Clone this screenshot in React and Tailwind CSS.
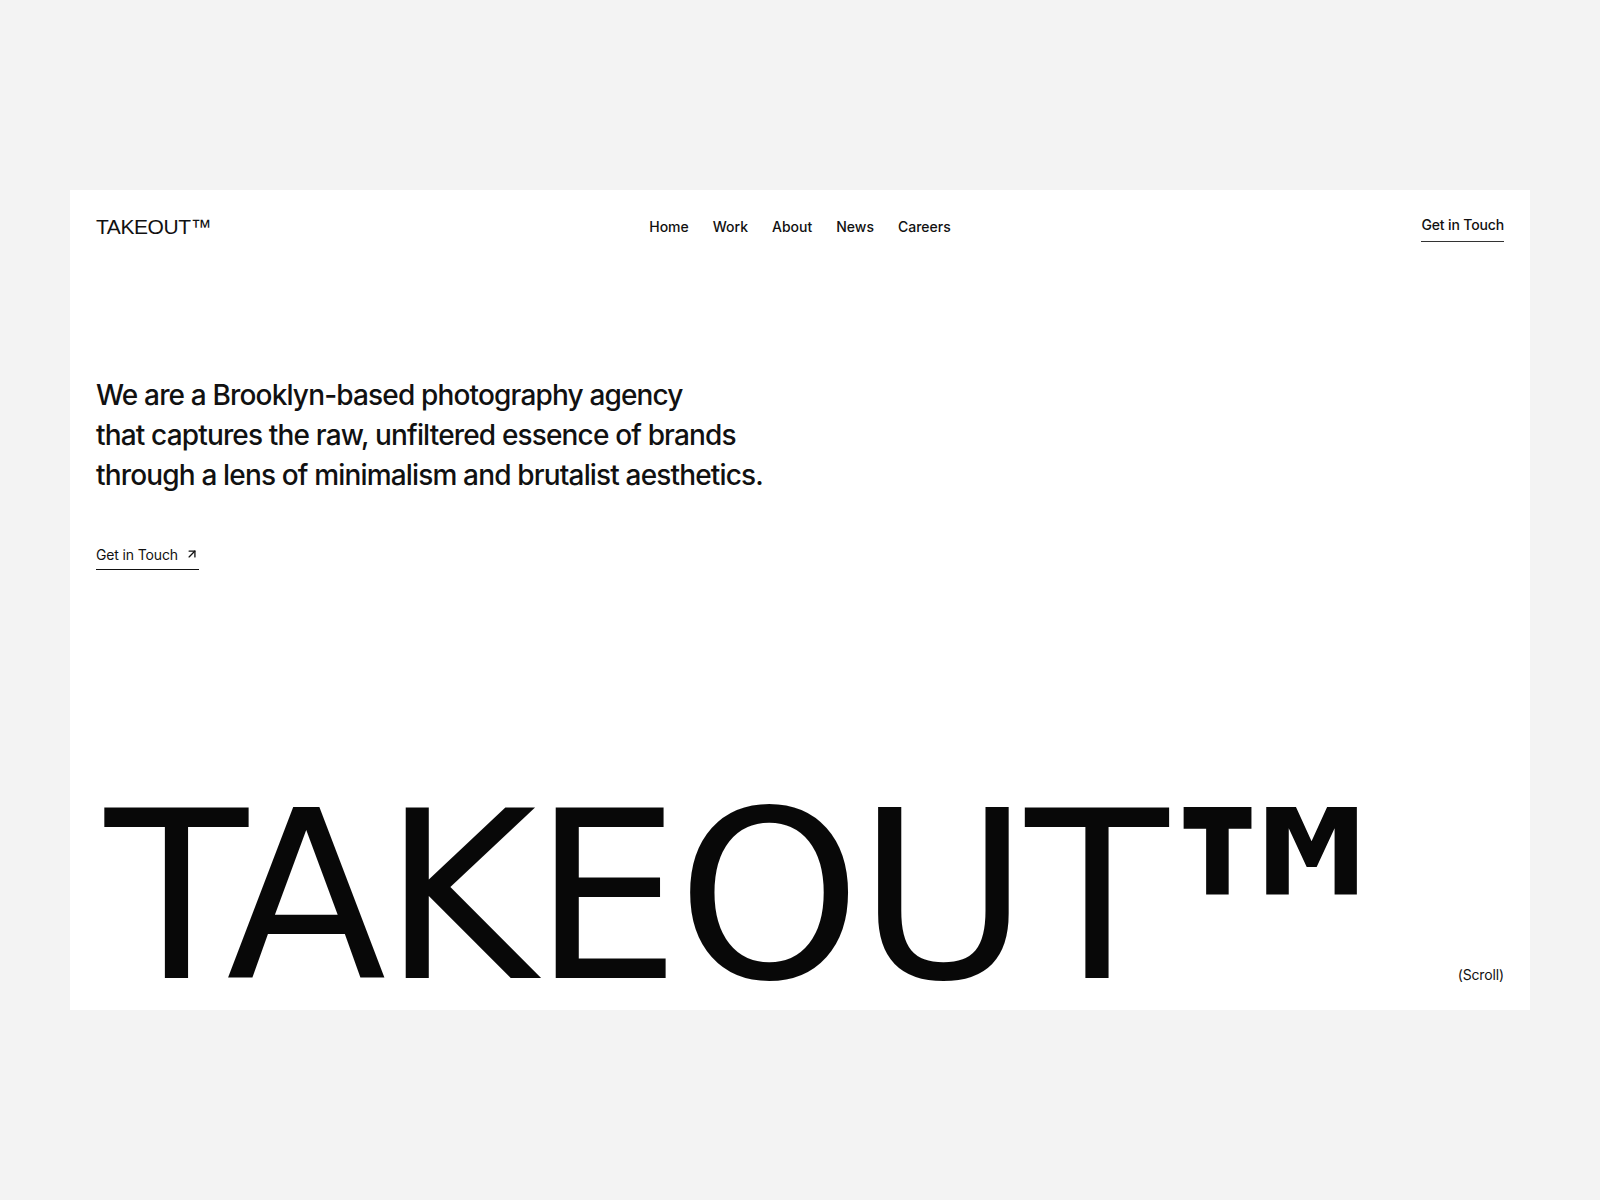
import { ArrowUpRight } from 'lucide-react';

const links = ['Home', 'Work', 'About', 'News', 'Careers'];

export default function App() {
  return (
    <div className="min-h-screen bg-[#f3f3f3] px-[70px] pt-[190px] pb-[190px] text-[#111] font-['Inter',sans-serif]">
      <div className="flex h-[820px] flex-col bg-white px-[26px]">
        <header className="grid grid-cols-3 items-center pt-[21px]">
          <a className="justify-self-start font-['Liberation_Sans',sans-serif] text-[21px] tracking-[-0.02em] text-[#111]">
            TAKEOUT™
          </a>
          <nav className="flex items-center gap-6 justify-self-center text-[14px] font-medium">
            {links.map((link) => (
              <a key={link} href="#" className="text-[#111]">
                {link}
              </a>
            ))}
          </nav>
          <a href="#" className="mt-[3px] justify-self-end border-b border-[#333] pb-[6px] text-[14px] font-medium tracking-[-0.01em]">
            Get in Touch
          </a>
        </header>

        <section className="mt-[132px]">
          <p className="text-[28px] font-medium leading-[40px] tracking-[-0.03em] text-[#111]">
            We are a Brooklyn-based photography agency
            <br />
            that captures the raw, unfiltered essence of brands
            <br />
            through a lens of minimalism and brutalist aesthetics.
          </p>
          <a href="#" className="mt-[49px] inline-flex items-center gap-[7px] border-b border-[#111] pb-[4px] text-[14px] tracking-[-0.01em]">
            Get in Touch
            <ArrowUpRight className="h-[14px] w-[14px]" strokeWidth={2.25} />
          </a>
        </section>

        <div className="mt-auto flex items-end justify-between">
          <h1 className="pl-[9px] font-['DejaVu_Sans',sans-serif] text-[234px] leading-[226px] tracking-[-0.015em] text-[#080808]">
            TAKEOUT
            <span className="ml-[-20px] inline-block origin-left scale-x-[0.865] align-[-55px] text-[310px] font-bold leading-[0]">™</span>
          </h1>
          <span className="mb-[25px] text-[14px] tracking-[-0.01em]">(Scroll)</span>
        </div>
      </div>
    </div>
  );
}
